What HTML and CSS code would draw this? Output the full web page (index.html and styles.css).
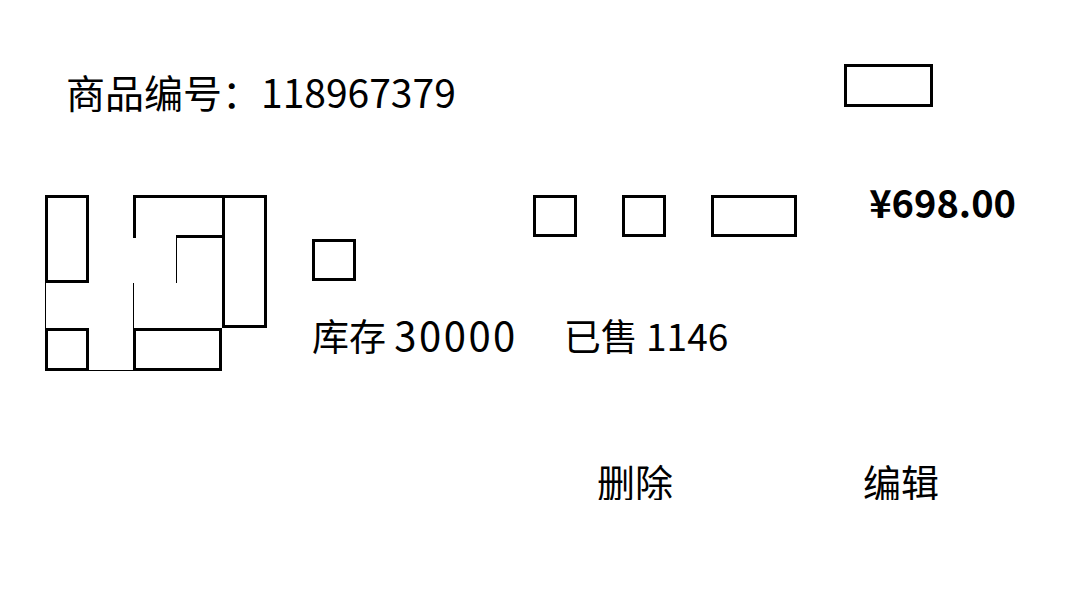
FILE: index.html
```html
<!DOCTYPE html>
<html lang="zh-CN">

<head>
    <meta charset="UTF-8">
    <meta name="viewport" content="width=device-width, initial-scale=1.0">
    <title>商品</title>
    <link rel="stylesheet" href="styles.css">
</head>

<body>
    <div class="card">
        <div class="header">
            <div class="code">商品编号：118967379</div>
            <div class="status-box"></div>
        </div>

        <div class="product">
            <div class="thumb">
                <div class="cell a"></div>
                <div class="cell b-top"></div>
                <div class="cell b-inner"></div>
                <div class="cell b-thin"></div>
                <div class="cell right"></div>
                <div class="cell thin-l1"></div>
                <div class="cell thin-l2"></div>
                <div class="cell c"></div>
                <div class="cell thin-b"></div>
                <div class="cell d"></div>
            </div>

            <div class="info">
                <div class="title-row">
                    <div class="title-boxes">
                        <div class="box sq"></div>
                        <div class="box sq"></div>
                        <div class="box wide"></div>
                    </div>
                    <div class="price">¥698.00</div>
                </div>
                <div class="box tag"></div>
                <div class="stock">库存 <span class="num">30000</span><span class="sold">已售 1146</span></div>
            </div>
        </div>

        <div class="actions">
            <span class="action">删除</span>
            <span class="action">编辑</span>
        </div>
    </div>
</body>

</html>
```

FILE: styles.css
```css
body {
    margin: 0;
    padding: 0;
    background: #fff;
    color: #000;
    font-family: "Noto Sans CJK SC", "Noto Sans", sans-serif;
}

.card {
    width: 1080px;
}

.header {
    display: flex;
    justify-content: space-between;
    align-items: flex-start;
    padding: 64px 147px 0 66px;
}

.code {
    font-size: 39px;
    line-height: 1;
    margin-top: 8px;
}

.status-box {
    width: 89px;
    height: 43px;
    box-sizing: border-box;
    border: 3px solid #000;
}

.product {
    display: flex;
    align-items: flex-start;
    margin-top: 84px;
    padding: 0 64px 0 45px;
}

.thumb {
    display: grid;
    grid-template-columns: 44px 44px 43px 46px 45px;
    grid-template-rows: 43px 45px 45px 43px;
    flex-shrink: 0;
}

.cell {
    box-sizing: border-box;
}

.a {
    grid-column: 1;
    grid-row: 1 / 3;
    border: 3px solid #000;
}

.b-top {
    grid-column: 3 / 5;
    grid-row: 1;
    border-top: 3px solid #000;
    border-left: 3px solid #000;
}

.b-inner {
    grid-column: 4;
    grid-row: 1;
    border-bottom: 3px solid #000;
}

.b-thin {
    grid-column: 4;
    grid-row: 2;
    border-left: 1px solid #000;
}

.right {
    grid-column: 5;
    grid-row: 1 / 4;
    border: 3px solid #000;
}

.thin-l1 {
    grid-column: 1;
    grid-row: 3;
    border-left: 1px solid #000;
}

.thin-l2 {
    grid-column: 3;
    grid-row: 3;
    border-left: 1px solid #000;
}

.c {
    grid-column: 1;
    grid-row: 4;
    border: 3px solid #000;
}

.thin-b {
    grid-column: 2;
    grid-row: 4;
    border-bottom: 1px solid #000;
}

.d {
    grid-column: 3 / 5;
    grid-row: 4;
    border: 3px solid #000;
}

.info {
    flex: 1;
    margin-left: 45px;
    display: flex;
    flex-direction: column;
    align-items: flex-start;
}

.title-row {
    display: flex;
    align-items: flex-start;
    align-self: stretch;
}

.title-boxes {
    display: flex;
    gap: 45px;
    margin-left: 221px;
}

.box {
    box-sizing: border-box;
    border: 3px solid #000;
    height: 42px;
}

.sq {
    width: 44px;
}

.wide {
    width: 86px;
}

.price {
    margin-left: auto;
    margin-top: -12px;
    font-size: 38px;
    font-weight: 700;
    line-height: 1;
}

.tag {
    width: 44px;
    margin-top: 2px;
}

.stock {
    margin-top: 33px;
    font-size: 37px;
    line-height: 1;
}

.num {
    font-size: 40px;
    letter-spacing: 2.5px;
}

.sold {
    margin-left: 46px;
}

.actions {
    display: flex;
    gap: 190px;
    margin-top: 91px;
    padding-left: 597px;
}

.action {
    font-size: 38px;
    line-height: 1;
}
```
